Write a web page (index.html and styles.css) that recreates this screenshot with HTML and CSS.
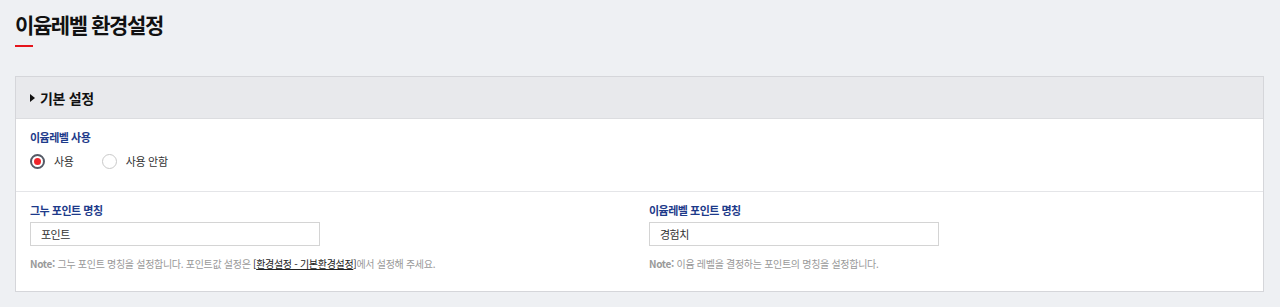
FILE: index.html
```html
<!DOCTYPE html>
<html lang="ko">
<head>
<meta charset="utf-8">
<link rel="stylesheet" href="styles.css">
</head>
<body>
<div class="page">
  <div class="page-title">
    <h1>이윰레벨 환경설정</h1>
    <span class="title-bar"></span>
  </div>
  <div class="panel">
    <div class="panel-head">
      <span class="caret"></span>
      <h2>기본 설정</h2>
    </div>
    <div class="section">
      <div class="label">이윰레벨 사용</div>
      <div class="radios">
        <label class="radio"><span class="dot checked"></span>사용</label>
        <label class="radio"><span class="dot"></span>사용 안함</label>
      </div>
    </div>
    <div class="section cols">
      <div class="col">
        <div class="label">그누 포인트 명칭</div>
        <div class="input">포인트</div>
        <p class="note"><b>Note:</b> 그누 포인트 명칭을 설정합니다. 포인트값 설정은 <a>[<u>환경설정 - 기본환경설정</u>]</a>에서 설정해 주세요.</p>
      </div>
      <div class="col">
        <div class="label">이윰레벨 포인트 명칭</div>
        <div class="input">경험치</div>
        <p class="note"><b>Note:</b> 이윰 레벨을 결정하는 포인트의 명칭을 설정합니다.</p>
      </div>
    </div>
  </div>
</div>
</body>
</html>
```

FILE: styles.css
```css
* { box-sizing: border-box; }
html, body { margin: 0; padding: 0; }
body {
  background: #eef0f3;
  font-family: "Noto Sans CJK KR", "Noto Sans", sans-serif;
  color: #222;
}
.page { padding: 0 16px 0 15px; }
.page-title { padding-top: 8px; height: 76px; }
.page-title h1 {
  margin: 0;
  font-size: 21px;
  font-weight: 700;
  line-height: 32px;
  color: #111;
  letter-spacing: -1.4px;
}
.title-bar {
  display: block;
  width: 18px;
  height: 2px;
  background: #e5141b;
  margin-top: 5px;
}
.panel {
  border: 1px solid #d5d6da;
  background: #fff;
}
.panel-head {
  height: 42px;
  background: #e8e9ec;
  border-bottom: 1px solid #dcdde0;
  display: flex;
  align-items: center;
  padding-left: 14px;
}
.caret {
  width: 0; height: 0;
  border-top: 4px solid transparent;
  border-bottom: 4px solid transparent;
  border-left: 5px solid #111;
  margin-right: 5px;
  margin-top: 1px;
}
.panel-head h2 {
  margin: 0;
  font-size: 14px;
  font-weight: 700;
  color: #111;
  letter-spacing: -0.3px;
}
.section {
  padding: 10px 14px 0;
  height: 73px;
  border-bottom: 1px solid #e4e5e8;
}
.section:last-child { border-bottom: 0; height: 99px; }
.label {
  font-size: 11px;
  font-weight: 700;
  color: #1d3a8a;
  line-height: 16px;
  letter-spacing: -0.5px;
}
.radios { display: flex; gap: 28px; margin-top: 7px; }
.radio {
  display: flex;
  align-items: center;
  font-size: 11px;
  color: #333;
  line-height: 18px;
  letter-spacing: -0.3px;
}
.dot {
  width: 15px; height: 15px;
  border-radius: 50%;
  border: 1.5px solid #c9c9c9;
  margin-right: 9px;
  display: inline-flex;
  align-items: center;
  justify-content: center;
}
.dot.checked { border: 2px solid #555a66; }
.dot.checked::after {
  content: "";
  width: 7px; height: 7px;
  border-radius: 50%;
  background: #f0252b;
}
.cols { display: grid; grid-template-columns: 600px 600px; column-gap: 19px; }
.input {
  width: 290px;
  height: 24px;
  border: 1px solid #d4d4d4;
  margin-top: 4px;
  padding-left: 10px;
  font-size: 11px;
  line-height: 22px;
  color: #333;
  letter-spacing: -0.5px;
}
.note {
  margin: 10px 0 0;
  font-size: 10px;
  color: #999;
  line-height: 16px;
  letter-spacing: -0.3px;
}
.note b { font-weight: 700; color: #999; }
.note a { color: #222; }
.note u { text-decoration: underline; }
```
